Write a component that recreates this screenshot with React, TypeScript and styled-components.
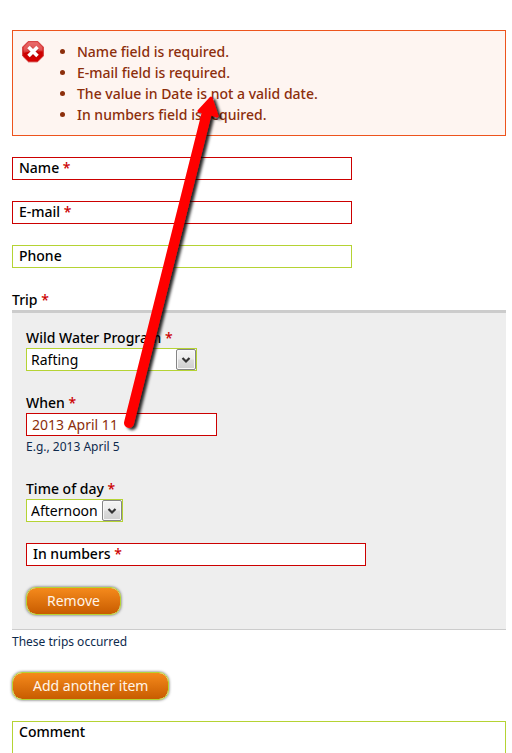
import React, { useId } from "react";
import styled, { createGlobalStyle, css } from "styled-components";

const color = {
  text: "#000",
  error: "#8c2e0b",
  required: "#cc0000",
  lime: "#b5d334",
  hint: "#0d2a4d",
};

const GlobalStyle = createGlobalStyle`
  *, *::before, *::after { box-sizing: border-box; }
  body {
    margin: 0;
    background: #fff;
    color: ${color.text};
    font: 14px/21px "Noto Sans", "Open Sans", sans-serif;
  }
`;

const Page = styled.form`
  position: relative;
  display: flex;
  flex-direction: column;
  padding: 30px 6px 0 12px;
`;

const Messages = styled.section`
  display: flex;
  align-items: flex-start;
  padding: 10px 9px;
  margin-bottom: 21px;
  border: 1px solid #ed541d;
  background: #fef5f1;
  color: ${color.error};
`;

const MessageList = styled.ul`
  margin: 0;
  padding: 0 0 0 31px;
  font-weight: 500;

  li::marker {
    font-size: 14px;
  }
`;

const Required = styled.span`
  color: ${color.required};
`;

const labelText = css`
  font-weight: 500;
  line-height: 21px;
`;

const box = css<{ $invalid?: boolean }>`
  display: block;
  margin: 0;
  border: 1px solid ${(p) => (p.$invalid ? color.required : color.lime)};
  border-radius: 0;
  background: #fff;
  font: inherit;
  outline: none;
`;

const OverlayField = styled.div<{ $wide?: boolean }>`
  position: relative;
  width: 100%;
  max-width: ${(p) => (p.$wide ? "none" : "340px")};
  margin-bottom: ${(p) => (p.$wide ? "0" : "21px")};
`;

const OverlayLabel = styled.label`
  ${labelText}
  position: absolute;
  top: 0;
  left: 7px;
`;

const TextInput = styled.input<{ $invalid?: boolean; $short?: boolean }>`
  ${box}
  width: ${(p) => (p.$short ? "191px" : "100%")};
  height: 23px;
  padding: 0 5px;
  color: ${(p) => (p.$invalid ? color.error : color.text)};
`;

const TextArea = styled.textarea`
  ${box}
  width: 100%;
  height: 120px;
  padding: 1px 5px;
  resize: none;
`;

const Fieldset = styled.fieldset`
  min-width: 0;
  margin: 0;
  padding: 0;
  border: 0;
`;

const Legend = styled.legend`
  ${labelText}
  padding: 0;
`;

const Panel = styled.div`
  padding: 14px;
  border-top: 3px solid #ccc;
  border-bottom: 1px solid #ccc;
  background: #eee;
`;

const Field = styled.div`
  display: flex;
  flex-direction: column;
  align-items: flex-start;
  margin-bottom: 21px;
`;

const Label = styled.label`
  ${labelText}
`;

const Hint = styled.small`
  color: ${color.hint};
  font-size: 12px;
  line-height: 21px;
`;

const SelectShell = styled.div<{ $wide?: boolean }>`
  position: relative;
  width: ${(p) => (p.$wide ? "171px" : "97px")};
`;

const NativeSelect = styled.select`
  ${box}
  width: 100%;
  height: 23px;
  padding: 0 20px 0 4px;
  appearance: none;
  color: ${color.text};
`;

const ArrowButton = styled.span`
  position: absolute;
  top: 1px;
  right: 1px;
  bottom: 1px;
  display: grid;
  place-items: center;
  width: 20px;
  border: 1px solid #858585;
  border-radius: 2px;
  background: linear-gradient(#f4f4f4, #ececec 48%, #dcdcdc 52%, #cfcfcf);
  box-shadow: inset 0 0 0 1px #f8f8f8;
  pointer-events: none;
`;

const ActionButton = styled.button`
  align-self: flex-start;
  display: block;
  height: 28px;
  padding: 0 20px;
  border: 1px solid ${color.lime};
  border-radius: 10px;
  background: linear-gradient(#f58a1c, #c85c00) padding-box;
  box-shadow: 0 0 3px #555;
  color: #fff4e8;
  font: inherit;
  line-height: 20px;
`;

const AddRow = styled.div`
  margin: 20px 0 21px;
`;

const Arrow = styled.svg`
  position: absolute;
  top: 90px;
  left: 110px;
  width: 130px;
  height: 350px;
  pointer-events: none;
`;

const Star = () => <Required aria-hidden="true">*</Required>;

function StopIcon() {
  return (
    <svg width="24" height="24" viewBox="1 1 24 24" role="img" aria-label="Error">
      <defs>
        <linearGradient id="stop" x1="0" y1="0" x2="0" y2="1">
          <stop offset="0" stopColor="#e45050" />
          <stop offset=".42" stopColor="#dc2c2c" />
          <stop offset=".55" stopColor="#cc0000" />
          <stop offset="1" stopColor="#d40000" />
        </linearGradient>
      </defs>
      <path d="M7.500 1.200h9l5.800 5.800v9l-5.800 5.800h-9L1.700 16V7z" fill="url(#stop)" stroke="#cf3030" />
      <path d="M7.800 2.200h8.400l5.100 5.100v3.500Q12 9.500 2.700 13V7.300z" fill="#fff" opacity=".18" />
      <path d="M8 7.500l8.500 8.500M16.500 7.500L8 16" stroke="#8e1010" strokeWidth="5" opacity=".35" />
      <path d="M7.500 7l9 9M16.500 7l-9 9" stroke="#fff" strokeWidth="3.600" />
    </svg>
  );
}

function Select({ id, value, wide }: { id: string; value: string; wide?: boolean }) {
  return (
    <SelectShell $wide={wide}>
      <NativeSelect id={id} defaultValue={value}>
        <option>{value}</option>
      </NativeSelect>
      <ArrowButton aria-hidden="true">
        <svg width="10" height="8" viewBox="0 0 10 8">
          <path d="M1.500 2L5 5.500 8.500 2" fill="none" stroke="#333" strokeWidth="2.200" />
        </svg>
      </ArrowButton>
    </SelectShell>
  );
}

function InlineField({ label, required }: { label: string; required?: boolean }) {
  const id = useId();
  return (
    <OverlayField>
      <TextInput id={id} type="text" $invalid={required} />
      <OverlayLabel htmlFor={id}>
        {label} {required && <Star />}
      </OverlayLabel>
    </OverlayField>
  );
}

const errors = [
  "Name field is required.",
  "E-mail field is required.",
  "The value in Date is not a valid date.",
  "In numbers field is required.",
];

export default function App() {
  return (
    <>
      <GlobalStyle />
      <Page noValidate onSubmit={(e) => e.preventDefault()}>
        <Messages role="alert">
          <StopIcon />
          <MessageList>
            {errors.map((e) => (
              <li key={e}>{e}</li>
            ))}
          </MessageList>
        </Messages>

        <InlineField label="Name" required />
        <InlineField label="E-mail" required />
        <InlineField label="Phone" />

        <Fieldset>
          <Legend>
            Trip <Star />
          </Legend>
          <Panel>
            <Field>
              <Label htmlFor="program">
                Wild Water Program <Star />
              </Label>
              <Select id="program" value="Rafting" wide />
            </Field>
            <Field>
              <Label htmlFor="when">
                When <Star />
              </Label>
              <TextInput id="when" type="text" defaultValue="2013 April 11" aria-describedby="when-hint" $invalid $short />
              <Hint id="when-hint">E.g., 2013 April 5</Hint>
            </Field>
            <Field>
              <Label htmlFor="time">
                Time of day <Star />
              </Label>
              <Select id="time" value="Afternoon" />
            </Field>
            <InlineField label="In numbers" required />
            <ActionButton type="button">Remove</ActionButton>
          </Panel>
          <Hint>These trips occurred</Hint>
        </Fieldset>

        <AddRow>
          <ActionButton type="button">Add another item</ActionButton>
        </AddRow>

        <OverlayField $wide>
          <TextArea id="comment" />
          <OverlayLabel htmlFor="comment">Comment</OverlayLabel>
        </OverlayField>

        <Arrow viewBox="110 90 130 350" aria-hidden="true">
          <defs>
            <filter id="shade" x="-20%" y="-10%" width="150%" height="120%">
              <feDropShadow dx="3" dy="2" stdDeviation="1.500" floodColor="#000" floodOpacity=".85" />
            </filter>
          </defs>
          <g filter="url(#shade)" fill="#f00" stroke="#f00" strokeLinecap="round" strokeLinejoin="round">
            <path d="M129 423L207 112" strokeWidth="10" />
            <path d="M211 98L217 116 209 113 199 111Z" strokeWidth="3" />
          </g>
        </Arrow>
      </Page>
    </>
  );
}
